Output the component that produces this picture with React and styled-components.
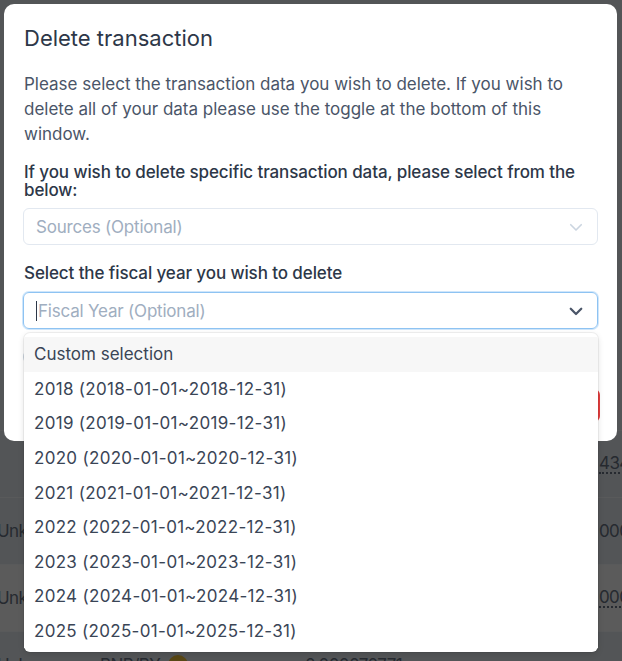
import React from 'react';
import styled, { createGlobalStyle } from 'styled-components';

const GlobalStyle = createGlobalStyle`
  html, body {
    margin: 0;
    padding: 0;
    font-family: Inter, "Noto Sans", sans-serif;
  }
  * { box-sizing: border-box; }
`;

const Page = styled.div`
  position: relative;
  width: 622px;
  height: 661px;
  overflow: hidden;
  background: #e6ebf1;
`;

const PageHeader = styled.div`
  height: 431px;
  border-bottom: 1px solid #f3f5f8;
`;

const Row = styled.div`
  display: grid;
  grid-template-columns: 100px 205px 294px 1fr;
  align-items: center;
  height: 67px;
  border-bottom: 1px solid #f6f8fb;
  background: ${({ $hover }) => ($hover ? '#fbfbfb' : 'transparent')};
  color: #6b7586;
  font-size: 17px;
  letter-spacing: -0.6px;
`;

const Cell = styled.div`
  white-space: nowrap;
  display: flex;
  align-items: center;
  gap: 8px;
  margin-left: ${({ $shift }) => $shift || 0}px;
`;

const Amount = styled.span`
  border-bottom: ${({ $dotted }) => ($dotted ? '2px dotted #6b7586' : 'none')};
  line-height: 18px;
`;

const Coin = styled.span`
  width: 20px;
  height: 20px;
  border-radius: 50%;
  background: #f3c53c;
`;

const Overlay = styled.div`
  position: absolute;
  inset: 0;
  background: rgba(0, 0, 0, 0.64);
  padding: 4px 5px 0 4px;
`;

const Modal = styled.div`
  width: 613px;
  height: 437px;
  background: #ffffff;
  border-radius: 10px;
  padding: 20px 19px 0 19px;
  display: flex;
  flex-direction: column;
  color: #2d3748;
`;

const Title = styled.h2`
  margin: 0 0 0 1px;
  font-size: 22px;
  line-height: 28px;
  font-weight: 400;
  color: #2d3748;
`;

const Paragraph = styled.p`
  margin: 20px 0 0 1px;
  font-size: 17px;
  line-height: 25px;
  color: #4a5568;
`;

const Label = styled.div`
  margin: ${({ $top }) => $top}px 0 0 1px;
  font-size: 17px;
  line-height: 18px;
  letter-spacing: -0.1px;
  font-weight: 500;
  color: #2d3748;
`;

const Field = styled.div`
  position: relative;
  margin-top: ${({ $top }) => $top}px;
`;

const Select = styled.div`
  height: 37px;
  display: flex;
  align-items: center;
  justify-content: space-between;
  padding: 0 12px 0 12px;
  border: 1px solid ${({ $focused }) => ($focused ? '#8ec3f2' : '#e2e8f0')};
  border-radius: 6px;
  box-shadow: ${({ $focused }) => ($focused ? '0 0 0 1px #cfe6fb' : 'none')};
  font-size: 17px;
  letter-spacing: -0.2px;
  color: #a0aec0;
`;

const Placeholder = styled.span`
  padding-left: ${({ $caret }) => ($caret ? '1px' : '0')};
  border-left: ${({ $caret }) => ($caret ? '1px solid #2d3748' : 'none')};
  line-height: 20px;
`;

const Menu = styled.div`
  position: absolute;
  top: calc(100% + 4px);
  left: 1px;
  right: 0;
  padding: 4px 0;
  background: #ffffff;
  border-radius: 6px;
  box-shadow: 0 2px 6px rgba(0, 0, 0, 0.12), 0 0 0 1px rgba(0, 0, 0, 0.05);
  z-index: 2;
`;

const Option = styled.div`
  height: 34.6px;
  display: flex;
  align-items: center;
  padding: 0 10px;
  font-size: 17px;
  letter-spacing: ${({ $dates }) => ($dates ? '0.3px' : '0')};
  color: #3a4556;
  background: ${({ $active }) => ($active ? '#f7f7f7' : '#ffffff')};
`;

const ToggleRow = styled.div`
  display: flex;
  align-items: center;
  gap: 10px;
  margin-top: 18px;
  font-size: 17px;
`;

const Switch = styled.span`
  width: 34px;
  height: 18px;
  border-radius: 9px;
  background: #cbd5e0;
`;

const Footer = styled.div`
  display: flex;
  justify-content: flex-end;
  margin-top: 22px;
`;

const DangerButton = styled.button`
  height: 33px;
  padding: 0 16px;
  border: none;
  border-radius: 6px;
  background: #e53e3e;
  color: #ffffff;
  font: inherit;
  font-size: 16px;
  margin-right: -2px;
`;

function Chevron({ strong }) {
  return (
    <svg width="18" height="18" viewBox="0 0 24 24" fill="none"
      stroke={strong ? '#4a5568' : '#cbd5e0'} strokeWidth={strong ? 3 : 2.2}
      strokeLinecap="round" strokeLinejoin="round">
      <polyline points="5 9 12 16 19 9" />
    </svg>
  );
}

const years = [2018, 2019, 2020, 2021, 2022, 2023, 2024, 2025];

const rows = [
  { right: '434.2178', dotted: true },
  { name: 'Unknown', right: '000.0000' },
  { name: 'Unknown', right: '000.0000', dotted: true, hover: true },
  { name: 'Unknown', pair: 'BNB/BY', amount: '0.000070771' },
];

export default function App() {
  return (
    <>
      <GlobalStyle />
      <Page>
        <PageHeader />
        {rows.map((r, i) => (
          <Row key={i} $hover={r.hover}>
            <Cell $shift={-3}>{r.name || ''}</Cell>
            <Cell>
              {r.pair && (
                <>
                  {r.pair} <Coin />
                </>
              )}
            </Cell>
            <Cell>{r.amount || ''}</Cell>
            <Cell>
              {r.right && <Amount $dotted={r.dotted}>{r.right}</Amount>}
            </Cell>
          </Row>
        ))}

        <Overlay>
          <Modal>
            <Title>Delete transaction</Title>
            <Paragraph>
              Please select the transaction data you wish to delete. If you wish to
              delete all of your data please use the toggle at the bottom of this
              window.
            </Paragraph>
            <Label $top={16}>
              If you wish to delete specific transaction data, please select from the
              below:
            </Label>
            <Field $top={9}>
              <Select>
                <Placeholder>Sources (Optional)</Placeholder>
                <Chevron />
              </Select>
            </Field>
            <Label $top={19}>Select the fiscal year you wish to delete</Label>
            <Field $top={10}>
              <Select $focused>
                <Placeholder $caret>Fiscal Year (Optional)</Placeholder>
                <Chevron strong />
              </Select>
              <Menu>
                <Option $active>Custom selection</Option>
                {years.map((y) => (
                  <Option key={y} $dates>
                    {y} ({y}-01-01~{y}-12-31)
                  </Option>
                ))}
              </Menu>
            </Field>
            <ToggleRow>
              <Switch />
              Delete all of your transaction data
            </ToggleRow>
            <Footer>
              <DangerButton>Delete</DangerButton>
            </Footer>
          </Modal>
        </Overlay>
      </Page>
    </>
  );
}
